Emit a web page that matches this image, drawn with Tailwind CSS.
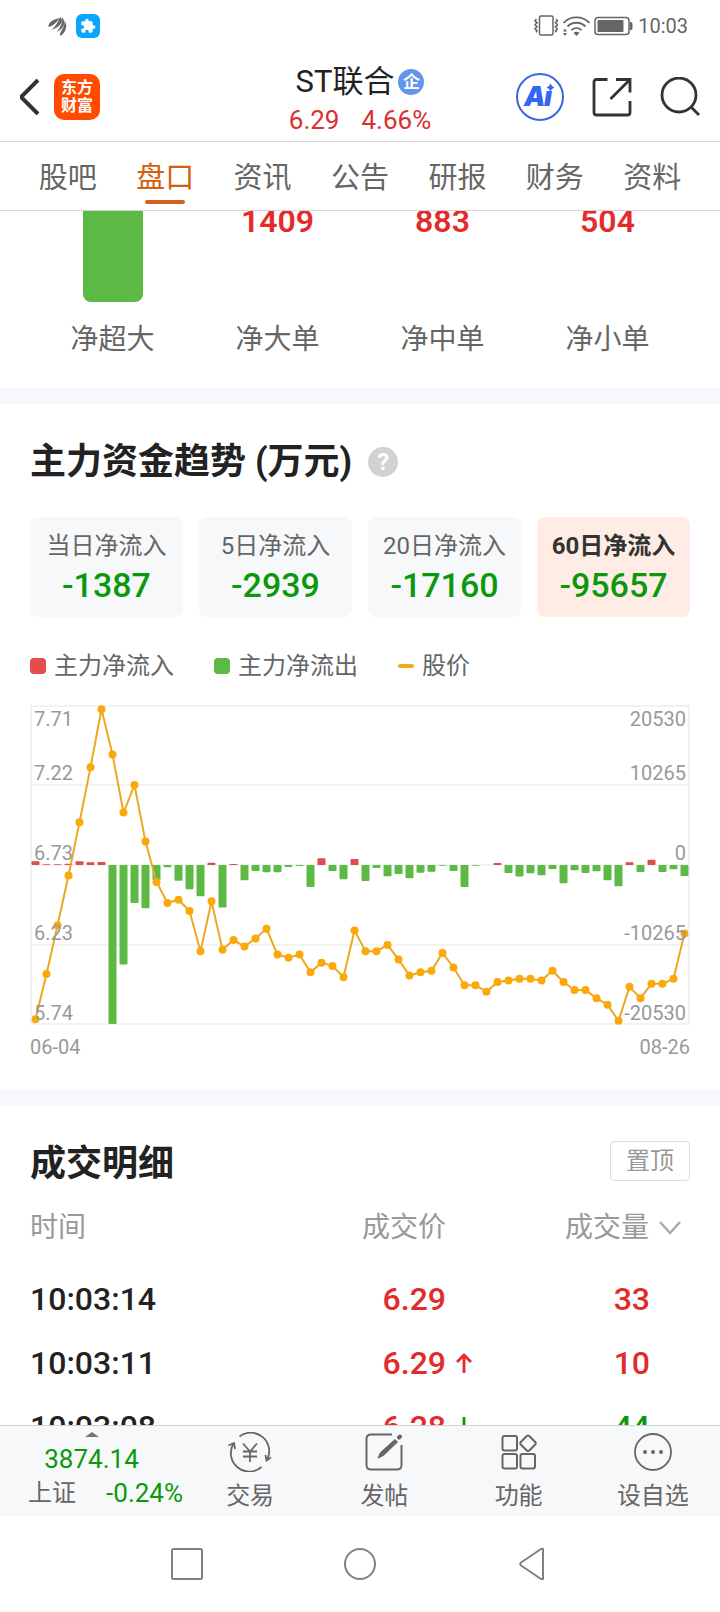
<!DOCTYPE html>
<html lang="zh-CN">
  <head>
    <meta charset="UTF-8" />
    <meta name="viewport" content="width=device-width, initial-scale=1" />
    <title>ST联合 盘口</title>
    <script src="https://cdn.jsdelivr.net/npm/@tailwindcss/browser@4"></script>
  </head>
  <body class="h-screen flex flex-col overflow-hidden bg-white text-[#222] font-['Roboto','Noto_Sans_CJK_SC',sans-serif]">
    <!-- Status bar -->
    <div class="h-13 shrink-0 flex items-center justify-between pl-12 pr-8 text-[#666]">
      <div class="flex items-center gap-2">
        <svg class="w-5 h-5" viewBox="0 0 20 20" fill="currentColor">
          <path d="M0.5 11C0 6 6 3 12 2C9 5.500 7 9 0.500 11Z" />
          <path d="M3 14C8 10.500 9.500 6 12.500 1C16 4.500 13 11 3 14Z" />
          <path d="M8.500 16C12.500 12 14.500 7 14 1.500C18.500 6 16 13 8.500 16Z" />
          <path d="M12.500 20C10.500 16 17 13 16.500 4.500C20 10 18 16 12.500 20Z" />
        </svg>
        <span class="w-6 h-6 rounded-md bg-[#0aa5ff] flex items-center justify-center">
          <svg class="w-4 h-4" viewBox="0 0 24 24" fill="#fff">
            <path d="M20.5 11H19V7c0-1.1-.9-2-2-2h-4V3.5C13 2.12 11.88 1 10.5 1S8 2.12 8 3.5V5H4c-1.1 0-2 .9-2 2v3.8h1.5c1.49 0 2.7 1.21 2.7 2.7s-1.21 2.7-2.7 2.7H2V20c0 1.1.9 2 2 2h3.8v-1.5c0-1.49 1.21-2.7 2.7-2.7s2.7 1.21 2.7 2.7V22H17c1.1 0 2-.9 2-2v-4h1.5c1.38 0 2.5-1.12 2.5-2.500S21.880 11 20.500 11z" />
          </svg>
        </span>
      </div>
      <div class="flex items-center gap-1">
        <svg class="w-6 h-6" viewBox="0 0 24 24" fill="none" stroke="currentColor">
          <rect x="5.500" y="2" width="13.500" height="19" rx="1.500" stroke-width="1.500" />
          <path d="M2.500 5l-1.500 1.800 2 2-2 2 2 2-2 2 2 2-1 1.500M22 5l1.500 1.800-2 2 2 2-2 2 2 2-2 2 1 1.500" stroke-width="1.600" />
        </svg>
        <svg class="w-7 h-6" viewBox="0 0 28 24" fill="none" stroke="currentColor" stroke-width="1.800">
          <path d="M1.500 9C8.500 1.500 20.500 1.500 27.500 9M5.500 12.500C10.500 7.500 18.500 7.500 23.500 12.500M9.500 16.200C12.500 13.300 16.500 13.300 19.500 16.200" />
          <path d="M11.500 18.700q3-2 6 0l-3 3.300zM1 17.500l2-3 2 3zM1 19l2 3 2-3z" fill="currentColor" stroke="none" />
        </svg>
        <svg class="w-10 h-6" viewBox="0 0 40 24">
          <rect x="1" y="3.500" width="34" height="17" rx="3" fill="none" stroke="currentColor" stroke-width="1.500" />
          <rect x="3.500" y="6" width="26" height="12" rx="1" fill="currentColor" />
          <path d="M36 8h1q1.500 0 1.500 2v4q0 2-1.500 2h-1z" fill="currentColor" />
        </svg>
        <span class="text-[20px]">10:03</span>
      </div>
    </div>

    <!-- Title bar -->
    <header class="h-[90px] shrink-0 grid grid-cols-[1fr_auto_1fr] items-center px-5 border-b border-[#d6d6d6]">
      <div class="flex items-center gap-[14px]">
        <a href="#" aria-label="返回">
          <svg class="w-5 h-9" viewBox="0 0 20 36" fill="none" stroke="#333" stroke-width="4" stroke-linejoin="round">
            <path d="M18 1L1 18L18 35" />
          </svg>
        </a>
        <a href="#" class="w-[46px] h-[46px] rounded-[10px] bg-[#ff4a00] text-white font-bold text-[16px] leading-[18px] flex flex-col items-center justify-center">
          <span>东方</span><span>财富</span>
        </a>
      </div>
      <div class="pt-1.5 text-center">
        <h1 class="flex items-center justify-center gap-1 text-[31px] leading-10">
          ST联合
          <span class="w-[26px] h-[26px] rounded-full bg-[#6595ea] text-white text-[17px] leading-[26px] font-bold">企</span>
        </h1>
        <p class="flex justify-center gap-[22px] text-[26px] leading-9 text-[#d93030]">
          <span>6.29</span><span>4.66%</span>
        </p>
      </div>
      <div class="flex items-center justify-end gap-7">
        <a href="#" aria-label="AI 助手">
          <svg class="w-12 h-12" viewBox="0 0 48 48" fill="#3565f5">
            <circle cx="24" cy="24" r="23" fill="#fff" stroke="#3b66e0" stroke-width="2" />
            <text x="8" y="33" font-family="Inter" font-weight="900" font-style="italic" font-size="27">A</text>
            <text x="28" y="33" font-family="Inter" font-weight="900" font-style="italic" font-size="27">ı</text>
            <path d="M34.500 10.500q1 3.200 4 4q-3 .8-4 4q-1-3.200-4-4q3-.8 4-4z" />
          </svg>
        </a>
        <a href="#" aria-label="分享">
          <svg class="w-10 h-10" viewBox="0 0 40 40" fill="none" stroke="#333" stroke-width="2.800">
            <path d="M15.500 2.500H4.500Q2 2.500 2 5V35.500Q2 38 4.500 38H35.500Q38 38 38 35.500V24" />
            <path d="M24 2.500H38V15.500M38 2.500L18.500 22" />
          </svg>
        </a>
        <a href="#" aria-label="搜索">
          <svg class="w-10 h-10" viewBox="0 0 40 40" fill="none" stroke="#333" stroke-width="2.800">
            <circle cx="19" cy="18" r="17" />
            <path d="M31 30L39 38" />
          </svg>
        </a>
      </div>
    </header>

    <!-- Tabs -->
    <nav class="h-[69px] shrink-0 flex px-[19px] border-b border-[#d6d6d6] text-[29px] text-[#666]">
      <a href="#" class="flex-1 flex items-center justify-center pt-1.5">股吧</a>
      <a href="#" class="flex-1 flex items-center justify-center pt-1.5 relative text-[#d4600f]">
        盘口
        <span class="absolute bottom-1.5 w-10 h-1 rounded-full bg-[#d0601c]"></span>
      </a>
      <a href="#" class="flex-1 flex items-center justify-center pt-1.5">资讯</a>
      <a href="#" class="flex-1 flex items-center justify-center pt-1.5">公告</a>
      <a href="#" class="flex-1 flex items-center justify-center pt-1.5">研报</a>
      <a href="#" class="flex-1 flex items-center justify-center pt-1.5">财务</a>
      <a href="#" class="flex-1 flex items-center justify-center pt-1.5">资料</a>
    </nav>

    <main class="flex-1 min-h-0 overflow-hidden">
      <!-- Net order flow, scrolled up under the tabs -->
      <section class="grid grid-cols-4 px-[30px] pb-7 text-center">
        <div class="h-[109px] flex justify-center">
          <div class="w-[60px] h-[91px] rounded-b-lg bg-[#5bb944]"></div>
        </div>
        <div class="-mt-3 text-[32px] leading-[44px] font-semibold text-[#e32b2b]">1409</div>
        <div class="-mt-3 text-[32px] leading-[44px] font-semibold text-[#e32b2b]">883</div>
        <div class="-mt-3 text-[32px] leading-[44px] font-semibold text-[#e32b2b]">504</div>
        <div class="text-[28px] leading-10 text-[#666]">净超大</div>
        <div class="text-[28px] leading-10 text-[#666]">净大单</div>
        <div class="text-[28px] leading-10 text-[#666]">净中单</div>
        <div class="text-[28px] leading-10 text-[#666]">净小单</div>
      </section>

      <!-- Main capital trend -->
      <section class="border-t-16 border-[#f7f8fb] px-[30px] pt-8 pb-7">
        <div class="flex items-center gap-4">
          <h2 class="text-[36px] leading-[52px] font-bold">主力资金趋势 (万元)</h2>
          <button aria-label="说明" class="w-[30px] h-[30px] rounded-full bg-[#d2d2d4] text-white text-[24px] leading-[30px] font-bold">?</button>
        </div>
        <div class="mt-[29px] grid grid-cols-4 gap-4 text-[24px] text-[#666]">
          <button class="h-[100px] pt-1 rounded-lg bg-[#f7f8fa]">
            <span class="block leading-8">当日净流入</span>
            <span class="block text-[34px] leading-[46px] font-medium text-[#0c980c]">-1387</span>
          </button>
          <button class="h-[100px] pt-1 rounded-lg bg-[#f7f8fa]">
            <span class="block leading-8">5日净流入</span>
            <span class="block text-[34px] leading-[46px] font-medium text-[#0c980c]">-2939</span>
          </button>
          <button class="h-[100px] pt-1 rounded-lg bg-[#f7f8fa]">
            <span class="block leading-8">20日净流入</span>
            <span class="block text-[34px] leading-[46px] font-medium text-[#0c980c]">-17160</span>
          </button>
          <button class="h-[100px] pt-1 rounded-lg bg-[#ffede5]">
            <span class="block leading-8 font-bold text-[#333]">60日净流入</span>
            <span class="block text-[34px] leading-[46px] font-medium text-[#0c980c]">-95657</span>
          </button>
        </div>
        <div class="mt-8 flex gap-10 text-[24px] leading-[34px] text-[#666]">
          <span class="flex items-center gap-2"><i class="w-4 h-4 rounded bg-[#e84b4b]"></i>主力净流入</span>
          <span class="flex items-center gap-2"><i class="w-4 h-4 rounded bg-[#5bb944]"></i>主力净流出</span>
          <span class="flex items-center gap-2"><i class="w-4 h-1 rounded-full bg-[#f0ab1c]"></i>股价</span>
        </div>
        <svg id="trendChart" class="mt-[22px] block w-full" viewBox="0 0 660 320"></svg>
        <div class="mt-2 flex justify-between text-[20px] leading-7 text-[#999]">
          <span>06-04</span><span>08-26</span>
        </div>
      </section>

      <!-- Trade details -->
      <section class="border-t-16 border-[#f7f8fb] px-[30px] pt-8">
        <div class="flex items-start justify-between">
          <h2 class="text-[36px] leading-[54px] font-bold">成交明细</h2>
          <button class="mt-1 w-20 h-10 rounded border border-[#ddd] text-[24px] text-[#999]">置顶</button>
        </div>
        <table class="mt-2 w-full table-fixed text-[32px] font-medium text-[#e32b2b] text-right">
          <thead>
            <tr class="h-[58px] text-[28px] text-[#999]">
              <th class="w-2/5 font-normal text-left">时间</th>
              <th class="w-3/10 font-normal pr-[46px]">成交价</th>
              <th class="w-3/10 font-normal">
                <span class="flex items-center justify-end pr-2 gap-[9px]">
                  成交量
                  <svg class="w-6 h-4" viewBox="0 0 24 16" fill="none" stroke="#aaa" stroke-width="2.500"><path d="M2 2L12 13L22 2" /></svg>
                </span>
              </th>
            </tr>
          </thead>
          <tbody>
            <tr class="h-2.5"></tr>
            <tr class="h-16">
              <td class="text-left text-[#222]">10:03:14</td>
              <td class="pr-[46px]">6.29</td>
              <td class="pr-10">33</td>
            </tr>
            <tr class="h-16">
              <td class="text-left text-[#222]">10:03:11</td>
              <td>
                <span class="flex items-center justify-end pr-5 gap-2.5">
                  6.29
                  <svg class="w-4 h-5" viewBox="0 0 16 20" fill="none" stroke="#e32b2b" stroke-width="2.800"><path d="M8 20V2M1 9L8 2L15 9" /></svg>
                </span>
              </td>
              <td class="pr-10">10</td>
            </tr>
            <tr class="h-16">
              <td class="text-left text-[#222]">10:03:08</td>
              <td>
                <span class="flex items-center justify-end pr-5 gap-2.5">
                  6.28
                  <svg class="w-4 h-5" viewBox="0 0 16 20" fill="none" stroke="#0c980c" stroke-width="2.800"><path d="M8 0V18M1 11L8 18L15 11" /></svg>
                </span>
              </td>
              <td class="pr-10 text-[#0c980c]">44</td>
            </tr>
          </tbody>
        </table>
      </section>
    </main>

    <!-- Bottom toolbar -->
    <footer class="h-[91px] shrink-0 flex border-t border-[#d0d0d0] bg-[#f7f8fa] text-[24px] text-[#666]">
      <a href="#" class="w-[183px] flex flex-col items-center pt-1.5">
        <svg class="w-3.5 h-[5px]" viewBox="0 0 14 5" fill="#777"><path d="M0 5L7 0L14 5z" /></svg>
        <span class="mt-1 text-[26px] leading-9 text-[#0c980c]">3874.14</span>
        <span class="w-full pl-7 flex items-center justify-between leading-8">
          上证 <span class="text-[26px] text-[#0c980c]">-0.24%</span>
        </span>
      </a>
      <a href="#" class="flex-1 flex flex-col items-center pt-1.5">
        <svg class="w-11 h-10" viewBox="0 0 44 40" fill="none" stroke="currentColor" stroke-width="1.800">
          <path d="M11.500 4.500A18.500 18.500 0 0 1 39 28M33.500 35A18.500 18.500 0 0 1 5.500 11.500" />
          <path d="M0.500 13.500L6 11L7 17M43 25.500L38.500 28.500L37.500 23" />
          <path d="M15 11.500L22 19.500L29 11.500M22 19.500V30M15 19.500H29M15 24.500H29" />
        </svg>
        <span class="mt-1.5 leading-9">交易</span>
      </a>
      <a href="#" class="flex-1 flex flex-col items-center pt-1.5">
        <svg class="w-10 h-10" viewBox="0 0 40 40" fill="none" stroke="currentColor" stroke-width="2">
          <path d="M28 2.500H7Q2.500 2.500 2.500 7V33Q2.500 37.500 7 37.500H33Q37.500 37.500 37.500 33V13" />
          <path d="M31 7.500L33.500 10L19.500 23.500L14 26L16.500 20.500z" fill="currentColor" stroke-width="1" />
          <path d="M35 5.500L36 4.500" stroke-width="4" stroke-linecap="round" />
        </svg>
        <span class="mt-1.5 leading-9">发帖</span>
      </a>
      <a href="#" class="flex-1 flex flex-col items-center pt-1.5">
        <svg class="w-10 h-10" viewBox="0 0 40 40" fill="none" stroke="currentColor" stroke-width="2">
          <rect x="3.500" y="4" width="14.500" height="14.500" rx="2" />
          <rect x="3.500" y="22" width="14.500" height="14.500" rx="2" />
          <rect x="21.500" y="22" width="14.500" height="14.500" rx="2" />
          <path d="M27.500 4.200Q29 2.700 30.500 4.200L36 9.700Q37.500 11.200 36 12.700L30.500 18.200Q29 19.700 27.500 18.200L22 12.700Q20.500 11.200 22 9.700z" />
        </svg>
        <span class="mt-1.5 leading-9">功能</span>
      </a>
      <a href="#" class="flex-1 flex flex-col items-center pt-1.5">
        <svg class="w-10 h-10" viewBox="0 0 40 40" fill="currentColor">
          <circle cx="20" cy="20" r="18" fill="none" stroke="currentColor" stroke-width="1.800" />
          <circle cx="12" cy="20" r="2" />
          <circle cx="20" cy="20" r="2" />
          <circle cx="28" cy="20" r="2" />
        </svg>
        <span class="mt-1.5 leading-9">设自选</span>
      </a>
    </footer>

    <!-- System navigation -->
    <div class="h-24 shrink-0 w-[72%] mx-auto grid grid-cols-3 items-center justify-items-center">
      <button aria-label="最近任务">
        <svg class="w-8 h-8" viewBox="0 0 32 32" fill="none" stroke="#808085" stroke-width="2"><rect x="1" y="1" width="30" height="30" rx="1.500" /></svg>
      </button>
      <button aria-label="主页">
        <svg class="w-8 h-8" viewBox="0 0 32 32" fill="none" stroke="#808085" stroke-width="2"><circle cx="16" cy="16" r="15" /></svg>
      </button>
      <button aria-label="后退">
        <svg class="w-8 h-8" viewBox="0 0 32 32" fill="none" stroke="#808085" stroke-width="2" stroke-linejoin="round"><path d="M26 1V31Q25 31.500 24 31L4 17.500Q2.500 16 4 14.500L24 1Q25 0.500 26 1z" /></svg>
      </button>
    </div>

    <script>
      const prices = [
        5.77, 6.05, 6.35, 6.66, 6.99, 7.33, 7.69, 7.41, 7.05, 7.22,
        6.87, 6.62, 6.49, 6.51, 6.44, 6.19, 6.5, 6.2, 6.26, 6.22,
        6.27, 6.33, 6.17, 6.15, 6.17, 6.06, 6.12, 6.1, 6.03, 6.32,
        6.19, 6.19, 6.23, 6.14, 6.04, 6.06, 6.07, 6.18, 6.09, 5.98,
        5.98, 5.94, 6.0, 6.01, 6.02, 6.02, 6.01, 6.07, 6.0, 5.95,
        5.95, 5.9, 5.86, 5.76, 5.97, 5.9, 5.99, 5.99, 6.02, 6.3,
      ];
      const flows = [
        470, 90, 90, 170, 470, 340, 390, -20530, -12840, -4900,
        -5580, -1980, -300, -2020, -3130, -4040, 300, -5500, 130, -1980,
        -770, -950, -950, -260, -130, -2830, 860, -770, -1850, 770,
        -2060, -390, -1460, -1160, -1720, -990, -860, -90, -770, -2830,
        -90, 0, 260, -1030, -1500, -1070, -1330, -520, -2360, -690,
        -1030, -820, -1980, -2750, 340, -900, 690, -900, -560, -1420,
      ];
      const yTop = 1, yMid = 160, yBottom = 319;
      const x = (i) => 5.5 + i * 11;
      const y = (p) => yTop + ((7.71 - p) / (7.71 - 5.74)) * (yBottom - yTop);

      let svg = "";
      for (const gy of [80, 160, 240]) {
        svg += `<path d="M1 ${gy}H659" stroke="#f2f2f2" stroke-width="2"/>`;
      }
      svg += `<rect x="1" y="1" width="658" height="318" fill="none" stroke="#f2f2f2" stroke-width="2"/>`;

      // Flow bars
      flows.forEach((v, i) => {
        const h = (Math.abs(v) / 20530) * (yBottom - yMid);
        svg += `<rect x="${x(i) - 4}" y="${v > 0 ? yMid - h : yMid}" width="8" height="${h}" rx="1" fill="${v > 0 ? "#dc4d4d" : "#5bb944"}"/>`;
      });

      // Price line
      svg += `<polyline points="${prices.map((p, i) => `${x(i)},${y(p)}`).join(" ")}" fill="none" stroke="#eba820" stroke-width="2"/>`;
      prices.forEach((p, i) => {
        svg += `<circle cx="${x(i)}" cy="${y(p)}" r="4" fill="#fba90a"/>`;
      });

      // Axis labels
      const rows = [21, 75, 155, 235, 315];
      ["7.71", "7.22", "6.73", "6.23", "5.74"].forEach((t, i) => {
        svg += `<text x="4" y="${rows[i]}" font-size="20" fill="#999">${t}</text>`;
      });
      ["20530", "10265", "0", "-10265", "-20530"].forEach((t, i) => {
        svg += `<text x="656" y="${rows[i]}" font-size="20" fill="#999" text-anchor="end">${t}</text>`;
      });
      document.getElementById("trendChart").innerHTML = svg;
    </script>
  </body>
</html>
